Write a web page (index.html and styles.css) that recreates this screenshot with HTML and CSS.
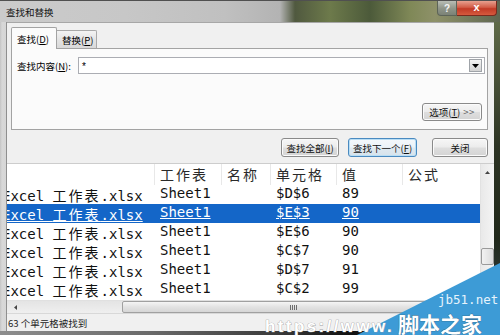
FILE: index.html
```html
<!DOCTYPE html>
<html>
<head>
<meta charset="utf-8">
<link rel="stylesheet" href="styles.css">
</head>
<body>
<div class="win">
  <div class="titlebar">
    <span class="title">查找和替换</span>
    <div class="caption">
      <span class="cap-help">?</span>
      <span class="cap-close">x</span>
    </div>
  </div>
  <div class="mid">
    <div class="lframe"></div>
    <div class="body">
      <div class="tabs">
        <div class="tab active">查找(<u>D</u>)</div>
        <div class="tab">替换(<u>P</u>)</div>
      </div>
      <div class="panel">
        <div class="find-row">
          <span class="label">查找内容(<u>N</u>):</span>
          <div class="combo">
            <span class="val">*</span>
            <span class="drop"><svg width="7" height="4" viewBox="0 0 7 4"><path d="M0 0H7L3.5 4Z" fill="#000"/></svg></span>
          </div>
        </div>
        <div class="opt-row">
          <button class="btn opt">选项(<u>T</u>) <span class="gt">&gt;&gt;</span></button>
        </div>
      </div>
      <div class="actions">
        <button class="btn b-all">查找全部(<u>I</u>)</button>
        <button class="btn b-next focus">查找下一个(<u>F</u>)</button>
        <button class="btn b-close">关闭</button>
      </div>
      <div class="results">
        <div class="list-area">
          <div class="list">
            <div class="cols head">
              <div class="c1"></div>
              <div class="c">工作表</div>
              <div class="c">名称</div>
              <div class="c">单元格</div>
              <div class="c">值</div>
              <div class="c">公式</div>
            </div>
            <div class="cols row">
              <div class="c1">Excel <span class="cj">工作表</span>.xlsx</div>
              <div class="c"><span>Sheet1</span></div><div class="c"></div><div class="c"><span>$D$6</span></div><div class="c"><span>89</span></div><div class="c"></div>
            </div>
            <div class="cols row sel">
              <div class="c1"><span>Excel <span class="cj">工作表</span>.xlsx</span></div>
              <div class="c"><span>Sheet1</span></div><div class="c"></div><div class="c"><span>$E$3</span></div><div class="c"><span>90</span></div><div class="c"></div>
            </div>
            <div class="cols row">
              <div class="c1">Excel <span class="cj">工作表</span>.xlsx</div>
              <div class="c"><span>Sheet1</span></div><div class="c"></div><div class="c"><span>$E$6</span></div><div class="c"><span>90</span></div><div class="c"></div>
            </div>
            <div class="cols row">
              <div class="c1">Excel <span class="cj">工作表</span>.xlsx</div>
              <div class="c"><span>Sheet1</span></div><div class="c"></div><div class="c"><span>$C$7</span></div><div class="c"><span>90</span></div><div class="c"></div>
            </div>
            <div class="cols row">
              <div class="c1">Excel <span class="cj">工作表</span>.xlsx</div>
              <div class="c"><span>Sheet1</span></div><div class="c"></div><div class="c"><span>$D$7</span></div><div class="c"><span>91</span></div><div class="c"></div>
            </div>
            <div class="cols row">
              <div class="c1">Excel <span class="cj">工作表</span>.xlsx</div>
              <div class="c"><span>Sheet1</span></div><div class="c"></div><div class="c"><span>$C$2</span></div><div class="c"><span>99</span></div><div class="c"></div>
            </div>
          </div>
          <div class="vscroll">
            <div class="arrow"><svg width="5" height="3" viewBox="0 0 5 3"><path d="M0 3H5L2.5 0Z" fill="#444"/></svg></div>
            <div class="vspace"></div>
            <div class="vthumb"></div>
          </div>
        </div>
        <div class="hscroll-row">
          <div class="hscroll">
            <div class="harrow"><svg width="3" height="5" viewBox="0 0 3 5"><path d="M3 0V5L0 2.5Z" fill="#444"/></svg></div>
            <div class="hspace"></div>
            <div class="hthumb"><span class="grip"></span></div>
          </div>
          <div class="corner"></div>
        </div>
      </div>
      <div class="status">63 个单元格被找到</div>
    </div>
    <div class="rframe"></div>
  </div>
  <div class="bframe"></div>
  <svg class="watermark" width="500" height="335" viewBox="0 0 500 335">
    <polygon points="357,335 500,263 500,335" fill="#3d9bd6"/>
    <text x="438" y="304" class="wm-site">jb51.net</text>
    <text x="265" y="332" class="wm-url">https://www.</text>
    <text x="398" y="332" class="wm-cn">脚本之家</text>
  </svg>
</div>
</body>
</html>
```

FILE: styles.css
```css
* { box-sizing: border-box; }

body {
  margin: 0;
  width: 500px;
  height: 335px;
  overflow: hidden;
  font-family: "Noto Sans CJK SC", "Liberation Sans", sans-serif;
}

.win {
  position: relative;
  width: 500px;
  height: 335px;
  display: flex;
  flex-direction: column;
  background: #3c4432;
}

/* title bar */
.titlebar {
  height: 22px;
  display: flex;
  align-items: center;
  border-top: 1px solid #505050;
  background: linear-gradient(to right, #cbcbcb 0, #c7c7c7 25%, #c0c0c0 45%, #b3b3b3 56%, #50593f 59%, #6d7a4b 66%, #4c5a3a 74%, #7f8857 82%, #8e9169 87%, #5e6650 100%);
}

.title {
  padding-left: 6px;
  font-size: 9.5px;
  color: #111;
}

.caption {
  margin-left: auto;
  margin-right: 3px;
  align-self: flex-start;
  display: flex;
}

.cap-help {
  width: 20px;
  height: 15px;
  display: flex;
  align-items: center;
  justify-content: center;
  font: bold 10px "Liberation Sans", sans-serif;
  color: #f4f4f4;
  background: linear-gradient(#b9bdb5, #8e9488 55%, #7b8276);
  border: 1px solid #5d6458;
  border-top: none;
  border-radius: 0 0 0 4px;
}

.cap-close {
  width: 40px;
  height: 15px;
  display: flex;
  align-items: center;
  justify-content: center;
  font: bold 11px "Liberation Sans", sans-serif;
  color: #fff;
  background: linear-gradient(#e8a08f, #d25d48 45%, #c23a26 55%, #d55a3e);
  border: 1px solid #7a2a1e;
  border-top: none;
  border-left: none;
  border-radius: 0 0 4px 0;
  line-height: 1;
  padding-bottom: 2px;
}

/* frame */
.mid {
  display: flex;
  height: 309px;
}

.lframe {
  width: 7px;
  background: linear-gradient(to right, #c4c4c4 0, #d8d8d8 30%, #d6d6d6 85%, #8f8f8f 86%);
}

.rframe {
  width: 6px;
  background: linear-gradient(#5f6a48, #2d3424 40%, #20281a 70%, #3d4a55);
}

.bframe {
  height: 4px;
  background: linear-gradient(to right, #8d8d8d 0, #6a6a6a 30%, #3b3b3b 55%, #111 70%, #222 100%);
}

.body {
  flex: 1;
  display: flex;
  flex-direction: column;
  background: #f0f0f0;
  border-top: 1px solid #a7a7a7;
  padding-top: 4px;
}

/* tabs */
.tabs {
  height: 21px;
  display: flex;
  align-items: flex-start;
  padding-left: 4px;
}

.tab {
  font-size: 9.5px;
  color: #000;
  display: flex;
  align-items: center;
}

.tab.active {
  width: 46px;
  height: 22px;
  padding-left: 5px;
  background: #fbfbfb;
  border: 1px solid #a3a3a3;
  border-bottom: none;
  border-radius: 2px 2px 0 0;
  position: relative;
  z-index: 1;
}

.tab:not(.active) {
  width: 40px;
  height: 18px;
  margin-top: 3px;
  padding-left: 5px;
  background: linear-gradient(#f3f3f3, #e4e4e4 50%, #d9d9d9);
  border: 1px solid #a9a9a9;
  border-left: none;
  border-bottom: none;
  border-radius: 0 2px 0 0;
}

/* panel */
.panel {
  height: 82px;
  margin: 0 6px 0 4px;
  border: 1px solid #a3a3a3;
  background: #fbfbfb;
  padding: 8px 2px 8px 5px;
  display: flex;
  flex-direction: column;
  justify-content: space-between;
}

.find-row {
  height: 17px;
  display: flex;
  align-items: center;
}

.label {
  width: 61px;
  font-size: 9.5px;
  color: #000;
}

.combo {
  flex: 1;
  height: 17px;
  border: 1px solid #abadb3;
  background: #fff;
  display: flex;
  align-items: center;
  padding-left: 3px;
  padding-right: 2px;
}

.val {
  font: 10px "Liberation Sans", sans-serif;
  color: #000;
  line-height: 1;
  margin-top: 3px;
}

.drop {
  margin-left: auto;
  width: 13px;
  height: 13px;
  border: 1px solid #9fa3a8;
  background: linear-gradient(#f4f4f4, #e3e3e3 50%, #d3d3d3);
  display: flex;
  align-items: center;
  justify-content: center;
}

.opt-row {
  display: flex;
  justify-content: flex-end;
  padding-right: 3px;
}

/* buttons */
.btn {
  height: 18px;
  padding: 0;
  border: 1px solid #8a8a8a;
  border-radius: 3px;
  background: linear-gradient(#f6f6f6 0, #ececec 48%, #dedede 52%, #d4d4d4 100%);
  box-shadow: inset 0 0 0 1px #fbfbfb;
  font: 9.5px "Noto Sans CJK SC", sans-serif;
  color: #111;
  display: flex;
  align-items: center;
  justify-content: center;
}

.opt { width: 60px; }
.gt { color: #666; margin-left: 3px; letter-spacing: 0.5px; }

.actions {
  height: 19px;
  margin-top: 8px;
  display: flex;
  justify-content: flex-end;
  padding-right: 6px;
}

.actions .btn { height: 19px; }
.b-all { width: 58px; margin-right: 9px; }
.b-next { width: 69px; margin-right: 15px; }
.b-close { width: 56px; }

.btn.focus {
  border-color: #4a8ac0;
  box-shadow: inset 0 0 0 1px #b9def5;
  background: linear-gradient(#f4f8fb 0, #ecf3f8 48%, #dfe9f0 52%, #d7e3ec 100%);
}

/* results */
.results {
  margin-top: 6px;
  height: 150px;
  display: flex;
  flex-direction: column;
  background: #fff;
  border-top: 1px solid #cdcdcd;
}

.list-area {
  height: 136px;
  display: flex;
}

.list {
  flex: 1;
  min-width: 0;
  overflow: hidden;
}

.cols {
  display: grid;
  grid-template-columns: 147px 67px 49px 66px 66px 1fr;
  white-space: nowrap;
}

.head {
  height: 21px;
  font: 14px "Noto Sans CJK SC", sans-serif;
  letter-spacing: 2px;
  color: #2a2a2a;
  line-height: 21px;
}

.head .c {
  border-left: 1px solid #e8e8e8;
  padding-left: 5px;
}

.row {
  height: 19px;
  line-height: 19px;
  font: 14px "DejaVu Sans Mono", "Noto Sans CJK SC", monospace;
  color: #111;
}

.row .c { padding-left: 6px; }
.row .c1 { text-indent: -5px; }

.cj {
  font-family: "Noto Sans CJK SC", sans-serif;
  letter-spacing: 2px;
}

.row.sel {
  background: #1466c8;
  color: #fff;
}

.row.sel span { text-decoration: underline; }

.vscroll {
  width: 14px;
  background: linear-gradient(to right, #e9e9e9, #f4f4f4);
  border-left: 1px solid #e2e2e2;
  display: flex;
  flex-direction: column;
  align-items: center;
}

.arrow {
  height: 17px;
  display: flex;
  align-items: center;
  justify-content: center;
}

.vspace { height: 67px; }

.vthumb {
  width: 13px;
  height: 17px;
  border: 1px solid #9a9a9a;
  border-radius: 2px;
  background: linear-gradient(to right, #f2f2f2, #dcdcdc);
}

.hscroll-row {
  height: 13px;
  display: flex;
}

.hscroll {
  flex: 1;
  display: flex;
  align-items: stretch;
  background: linear-gradient(#e4e4e4, #efefef);
  border-top: 1px solid #e0e0e0;
}

.harrow {
  width: 17px;
  display: flex;
  align-items: center;
  justify-content: center;
}

.hspace { width: 98px; }

.hthumb {
  width: 342px;
  border: 1px solid #a0a0a0;
  border-radius: 2px;
  background: linear-gradient(#f5f5f5, #e2e2e2 50%, #d6d6d6);
  display: flex;
  align-items: center;
  justify-content: center;
}

.grip {
  width: 7px;
  height: 5px;
  background: repeating-linear-gradient(to right, #6e6e6e 0, #6e6e6e 1px, transparent 1px, transparent 2px);
}

.corner {
  width: 14px;
  background: #f0f0f0;
}

.status {
  height: 18px;
  display: flex;
  align-items: center;
  padding-left: 1px;
  font-size: 9.5px;
  color: #222;
  background: #f0f0f0;
  border-top: 1px solid #d8d8d8;
}

/* watermark overlay */
.watermark {
  position: absolute;
  left: 0;
  top: 0;
  pointer-events: none;
}

.wm-site {
  font: 12.5px "DejaVu Sans Mono", monospace;
  fill: #e6f3fc;
}

.wm-url {
  font: bold 17px "Liberation Sans", sans-serif;
  letter-spacing: 2.4px;
  fill: #ffffff;
  stroke: #9a9a9a;
  stroke-width: 0.7px;
  paint-order: stroke;
}

.wm-cn {
  font: bold 21px "Noto Sans CJK SC", sans-serif;
  fill: #ffffff;
  stroke: #2f5f80;
  stroke-width: 0.6px;
  paint-order: stroke;
}
```
